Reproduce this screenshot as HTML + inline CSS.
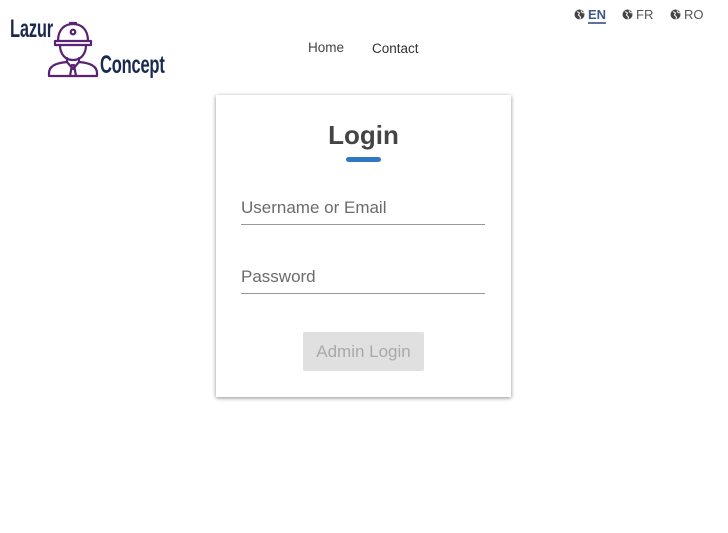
<!DOCTYPE html>
<html><head><meta charset="utf-8"><style>
*{margin:0;padding:0;box-sizing:border-box}
body{width:728px;height:533px;background:#fff;font-family:"Liberation Sans",sans-serif;position:relative;overflow:hidden}
.abs{position:absolute}
.logo{font-family:"Liberation Sans Narrow","Liberation Sans",sans-serif;font-weight:bold;color:#1a2a4f;transform:scaleX(.66);transform-origin:left top;font-size:25px;letter-spacing:-0.3px}
.lang{font-size:13px;color:#555;top:7px}
.lang svg{vertical-align:-1px;margin-right:3px}
.card{left:216px;top:95px;width:295px;height:302px;background:#fff;box-shadow:0 1px 4px rgba(0,0,0,.45)}
.field{position:absolute;left:25px;width:244px;border-bottom:1px solid #999;font-size:17px;color:#6b6b6b;padding-bottom:6px}
</style></head><body>
<div class="abs logo" style="left:10px;top:15px">Lazur</div>
<div class="abs logo" style="left:100px;top:51px">Concept</div>
<svg class="abs" style="left:47px;top:21px" width="52" height="57" viewBox="0 0 52 57" fill="none" stroke="#5a2272" stroke-width="2.2" stroke-linecap="round" stroke-linejoin="round">
<path d="M11 20 C11 8 18 3 26 3 C34 3 41 8 41 20"/>
<path d="M8 20 H44 V24 H8 Z"/>
<circle cx="26" cy="11" r="2.3"/>
<path d="M23 2 H29"/>
<path d="M13 24 C13 33 18 39 26 39 C34 39 39 33 39 24"/>
<path d="M20 37 V41 L26 48 L32 41 V37"/>
<path d="M20 41 C8 42 2 46 2 52 V55 H50 V52 C50 46 44 42 32 41"/>
<path d="M25 44 L23 55 M27 44 L29 55"/>
</svg>
<div class="abs" style="left:308px;top:40px;font-size:13.5px;color:#444">Home</div>
<div class="abs" style="left:372px;top:41px;font-size:13.5px;color:#333">Contact</div>
<svg width="0" height="0" style="position:absolute"><defs><g id="gl"><circle cx="5.5" cy="5.5" r="5" fill="#444"/><path d="M3 2.5 L5.5 4 L4.5 6 L6.5 8 L6 10.5 M7 1.5 L8 3.5 L10 4" stroke="#fff" stroke-width="1" fill="none"/></g></defs></svg>
<div class="abs lang" style="left:574px"><svg width="11" height="11"><use href="#gl"/></svg><span style="color:#3d5a8a;font-weight:bold;border-bottom:2px solid #5a73a0">EN</span></div>
<div class="abs lang" style="left:622px"><svg width="11" height="11"><use href="#gl"/></svg>FR</div>
<div class="abs lang" style="left:670px"><svg width="11" height="11"><use href="#gl"/></svg>RO</div>
<div class="abs card">
<div class="abs" style="left:0;width:295px;top:25px;text-align:center;font-size:26px;font-weight:bold;color:#444">Login</div>
<div class="abs" style="left:130px;top:62px;width:35px;height:5px;border-radius:3px;background:#2f78c4"></div>
<div class="field" style="top:103px">Username or Email</div>
<div class="field" style="top:172px">Password</div>
<div class="abs" style="left:87px;top:237px;width:121px;height:39px;background:#e0e0e0;border-radius:2px;color:#a9a9a9;font-size:17px;text-align:center;line-height:39px">Admin Login</div>
</div>
</body></html>
